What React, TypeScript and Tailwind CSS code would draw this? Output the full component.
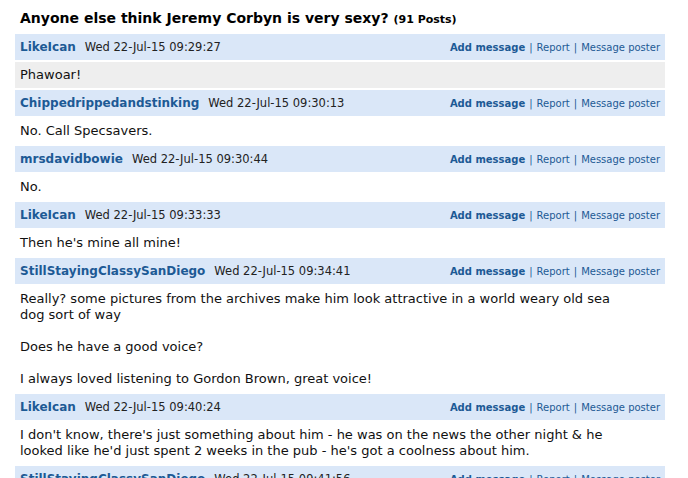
import React from 'react';

type Post = {
  author: string;
  date: string;
  lines: string[];
  shaded?: boolean;
};

const posts: Post[] = [
  { author: 'LikeIcan', date: 'Wed 22-Jul-15 09:29:27', lines: ['Phawoar!'], shaded: true },
  { author: 'Chippedrippedandstinking', date: 'Wed 22-Jul-15 09:30:13', lines: ['No. Call Specsavers.'] },
  { author: 'mrsdavidbowie', date: 'Wed 22-Jul-15 09:30:44', lines: ['No.'] },
  { author: 'LikeIcan', date: 'Wed 22-Jul-15 09:33:33', lines: ["Then he's mine all mine!"] },
  {
    author: 'StillStayingClassySanDiego',
    date: 'Wed 22-Jul-15 09:34:41',
    lines: [
      'Really? some pictures from the archives make him look attractive in a world weary old sea',
      'dog sort of way',
      '',
      'Does he have a good voice?',
      '',
      'I always loved listening to Gordon Brown, great voice!',
    ],
  },
  {
    author: 'LikeIcan',
    date: 'Wed 22-Jul-15 09:40:24',
    lines: [
      "I don't know, there's just something about him - he was on the news the other night & he",
      "looked like he'd just spent 2 weeks in the pub - he's got a coolness about him.",
    ],
  },
  { author: 'StillStayingClassySanDiego', date: 'Wed 22-Jul-15 09:41:56', lines: ['Ha!'] },
];

const PostHeader: React.FC<{ author: string; date: string }> = ({ author, date }) => (
  <div className="flex h-[26px] items-center justify-between bg-[#dae7f8] px-[5px]">
    <div className="flex items-baseline gap-[9px]">
      <a className="text-[12px] font-bold text-[#1d5a95]">{author}</a>
      <span className="text-[11.5px] text-[#222]">{date}</span>
    </div>
    <div className="flex items-baseline gap-[4px] text-[10px] text-[#1d5a95]">
      <a className="font-bold">Add message</a>
      <span>|</span>
      <a>Report</a>
      <span>|</span>
      <a>Message poster</a>
    </div>
  </div>
);

const App: React.FC = () => {
  return (
    <div className="h-[478px] overflow-hidden bg-white font-['DejaVu_Sans',Verdana,sans-serif] text-[#111]">
      <div className="w-[665px] pl-[15px] pt-[9px]">
        <h1 className="mb-[5px] px-[5px] text-[14px] font-bold leading-[18px] text-black">
          Anyone else think Jeremy Corbyn is very sexy?{' '}
          <span className="text-[11px]">(91 Posts)</span>
        </h1>
        <div className="flex flex-col gap-[2px]">
          {posts.map((post, i) => (
            <div key={i} className="flex flex-col gap-[2px]">
              <PostHeader author={post.author} date={post.date} />
              <div
                className={`px-[5px] py-[5px] text-[13px] leading-[16px] ${
                  post.shaded ? 'bg-[#eeeeee]' : 'bg-white'
                }`}
              >
                {post.lines.map((line, j) => (
                  <div key={j} className="h-[16px] whitespace-nowrap">
                    {line}
                  </div>
                ))}
              </div>
            </div>
          ))}
        </div>
      </div>
    </div>
  );
};

export default App;
